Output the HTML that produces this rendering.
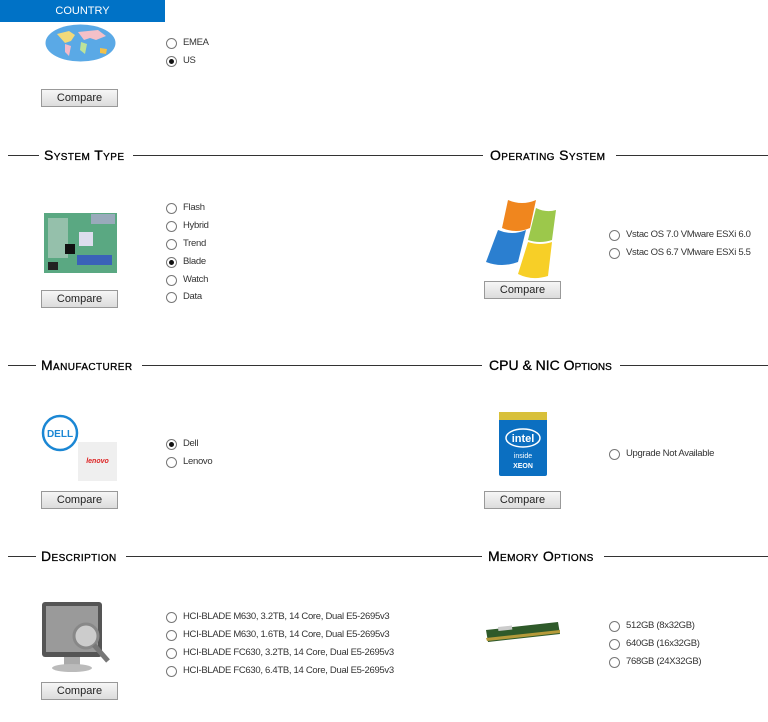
<!DOCTYPE html>
<html><head><meta charset="utf-8"><style>
body{margin:0;width:768px;height:722px;background:#fff;position:relative;overflow:hidden;font-family:"Liberation Sans",sans-serif;}
.a{position:absolute}
.bar{left:0;top:0;width:165px;height:22px;background:#0072c6;color:#fff;font-size:11px;line-height:23px;text-align:center}
.r{position:absolute;font-size:9.5px;color:#333;height:12px;line-height:12px;padding-left:17px;white-space:nowrap;letter-spacing:-0.3px}
.r:before{content:"";position:absolute;left:0;top:1px;width:9px;height:9px;border:1px solid #777;border-radius:50%;background:#fff}
.r.s:after{content:"";position:absolute;left:3px;top:4px;width:5px;height:5px;border-radius:50%;background:#111}
.btn{position:absolute;width:75px;height:16px;border:1px solid #999;background:linear-gradient(#f6f6f6,#dcdcdc);font-size:11px;line-height:16px;text-align:center;color:#222}
.line{position:absolute;height:1px;background:#333}
.h{position:absolute;font-size:14px;font-variant:small-caps;color:#000;line-height:16px;white-space:nowrap;letter-spacing:0.4px;-webkit-text-stroke:0.3px #000}
</style></head><body>
<div class="a bar">COUNTRY</div>
<svg class="a" style="left:45px;top:24px" width="71" height="38"><ellipse cx="35.5" cy="19" rx="35" ry="18.5" fill="#5aa9e6"/><path d="M12 10 l12-3 6 4 -4 6 -6 2 z" fill="#f2d97a"/><path d="M20 20 l6 2 -2 10 -4-4z" fill="#f3b9c9"/><path d="M33 8 l20-2 8 6 -10 4 -6-2 -6 2z" fill="#f4c0c8"/><path d="M36 18 l6 2 -2 10 -5-4z" fill="#bde39a"/><path d="M55 24 l7 1 -1 5 -6-1z" fill="#f2c14a"/></svg>
<div class="r" style="left:166px;top:37px">EMEA</div>
<div class="r s" style="left:166px;top:55px">US</div>
<div class="btn" style="left:41px;top:89px">Compare</div>

<div class="line" style="left:8px;width:31px;top:155px"></div>
<div class="h" style="left:44px;top:147px">System Type</div>
<div class="line" style="left:133px;width:350px;top:155px"></div>
<div class="h" style="left:490px;top:147px">Operating System</div>
<div class="line" style="left:616px;width:152px;top:155px"></div>

<svg class="a" style="left:43px;top:212px" width="75" height="62"><rect x="1" y="1" width="73" height="60" fill="#5aa882"/><rect x="5" y="6" width="20" height="40" fill="#cfd8d4" opacity=".5"/><rect x="48" y="2" width="24" height="10" fill="#9ab"/><rect x="36" y="20" width="14" height="14" fill="#dde"/><rect x="22" y="32" width="10" height="10" fill="#111"/><rect x="34" y="43" width="35" height="10" fill="#3a62b8"/><rect x="5" y="50" width="10" height="8" fill="#222"/></svg>
<div class="r" style="left:166px;top:202px">Flash</div>
<div class="r" style="left:166px;top:220px">Hybrid</div>
<div class="r" style="left:166px;top:238px">Trend</div>
<div class="r s" style="left:166px;top:256px">Blade</div>
<div class="r" style="left:166px;top:274px">Watch</div>
<div class="r" style="left:166px;top:291px">Data</div>
<div class="btn" style="left:41px;top:290px">Compare</div>

<svg class="a" style="left:484px;top:198px" width="78" height="82"><path d="M24 2 q14 6 28 0 l-6 28 q-14 6 -28 0z" fill="#f0861e"/><path d="M52 10 q10 5 20 2 l-4 30 q-12 4 -24 0z" fill="#9cc84b"/><path d="M14 32 q14 6 28 0 l-8 32 q-16 6 -32 0z" fill="#2b7fd0"/><path d="M44 44 q12 4 24 0 l-4 34 q-16 5 -30 -2z" fill="#f7cf27"/></svg>
<div class="r" style="left:609px;top:229px">Vstac OS 7.0 VMware ESXi 6.0</div>
<div class="r" style="left:609px;top:247px">Vstac OS 6.7 VMware ESXi 5.5</div>
<div class="btn" style="left:484px;top:281px">Compare</div>

<div class="line" style="left:8px;width:28px;top:365px"></div>
<div class="h" style="left:41px;top:357px">Manufacturer</div>
<div class="line" style="left:142px;width:340px;top:365px"></div>
<div class="h" style="left:489px;top:357px;letter-spacing:0">CPU &amp; NIC Options</div>
<div class="line" style="left:620px;width:148px;top:365px"></div>

<svg class="a" style="left:41px;top:414px" width="40" height="40"><circle cx="19" cy="19" r="17" fill="#fff" stroke="#1b87d4" stroke-width="2.5"/><text x="19" y="23" font-size="10" font-weight="bold" fill="#1b87d4" text-anchor="middle" font-family="Liberation Sans">DELL</text></svg>
<div class="a" style="left:78px;top:442px;width:39px;height:39px;background:#efefef;color:#d22;font-size:7px;font-style:italic;font-weight:bold;line-height:39px;text-align:center">lenovo</div>
<div class="r s" style="left:166px;top:438px">Dell</div>
<div class="r" style="left:166px;top:456px">Lenovo</div>
<div class="btn" style="left:41px;top:491px">Compare</div>

<svg class="a" style="left:499px;top:412px" width="48" height="64"><rect x="0" y="0" width="48" height="64" rx="2" fill="#0b6fc1"/><rect x="0" y="0" width="48" height="8" fill="#d8c03a"/><ellipse cx="24" cy="26" rx="17" ry="9" fill="none" stroke="#fff" stroke-width="1.5"/><text x="24" y="30" font-size="11" font-weight="bold" fill="#fff" text-anchor="middle" font-family="Liberation Sans">intel</text><text x="24" y="46" font-size="7" fill="#fff" text-anchor="middle" font-family="Liberation Sans">inside</text><text x="24" y="56" font-size="7" font-weight="bold" fill="#fff" text-anchor="middle" font-family="Liberation Sans">XEON</text></svg>
<div class="r" style="left:609px;top:448px">Upgrade Not Available</div>
<div class="btn" style="left:484px;top:491px">Compare</div>

<div class="line" style="left:8px;width:28px;top:556px"></div>
<div class="h" style="left:41px;top:548px">Description</div>
<div class="line" style="left:126px;width:356px;top:556px"></div>
<div class="h" style="left:488px;top:548px">Memory Options</div>
<div class="line" style="left:604px;width:164px;top:556px"></div>

<svg class="a" style="left:40px;top:600px" width="75" height="74"><rect x="2" y="2" width="60" height="55" rx="3" fill="#555"/><rect x="6" y="6" width="52" height="46" fill="#9a9a9a"/><rect x="24" y="57" width="16" height="8" fill="#aaa"/><ellipse cx="32" cy="68" rx="20" ry="4" fill="#bbb"/><circle cx="46" cy="36" r="12" fill="#ccc" stroke="#888" stroke-width="3"/><path d="M54 45 l14 16" stroke="#777" stroke-width="5"/></svg>
<div class="r" style="left:166px;top:611px">HCI-BLADE M630, 3.2TB, 14 Core, Dual E5-2695v3</div>
<div class="r" style="left:166px;top:629px">HCI-BLADE M630, 1.6TB, 14 Core, Dual E5-2695v3</div>
<div class="r" style="left:166px;top:647px">HCI-BLADE FC630, 3.2TB, 14 Core, Dual E5-2695v3</div>
<div class="r" style="left:166px;top:665px">HCI-BLADE FC630, 6.4TB, 14 Core, Dual E5-2695v3</div>
<div class="btn" style="left:41px;top:682px">Compare</div>

<svg class="a" style="left:484px;top:620px" width="78" height="24"><path d="M2 10 L74 2 L76 14 L4 22z" fill="#2f5a2a"/><path d="M2 18 L76 10 L76 13 L3 21z" fill="#b59a3a"/><rect x="14" y="7" width="14" height="4" fill="#ccc" transform="rotate(-6 14 7)"/></svg>
<div class="r" style="left:609px;top:620px">512GB (8x32GB)</div>
<div class="r" style="left:609px;top:638px">640GB (16x32GB)</div>
<div class="r" style="left:609px;top:656px">768GB (24X32GB)</div>
</body></html>
